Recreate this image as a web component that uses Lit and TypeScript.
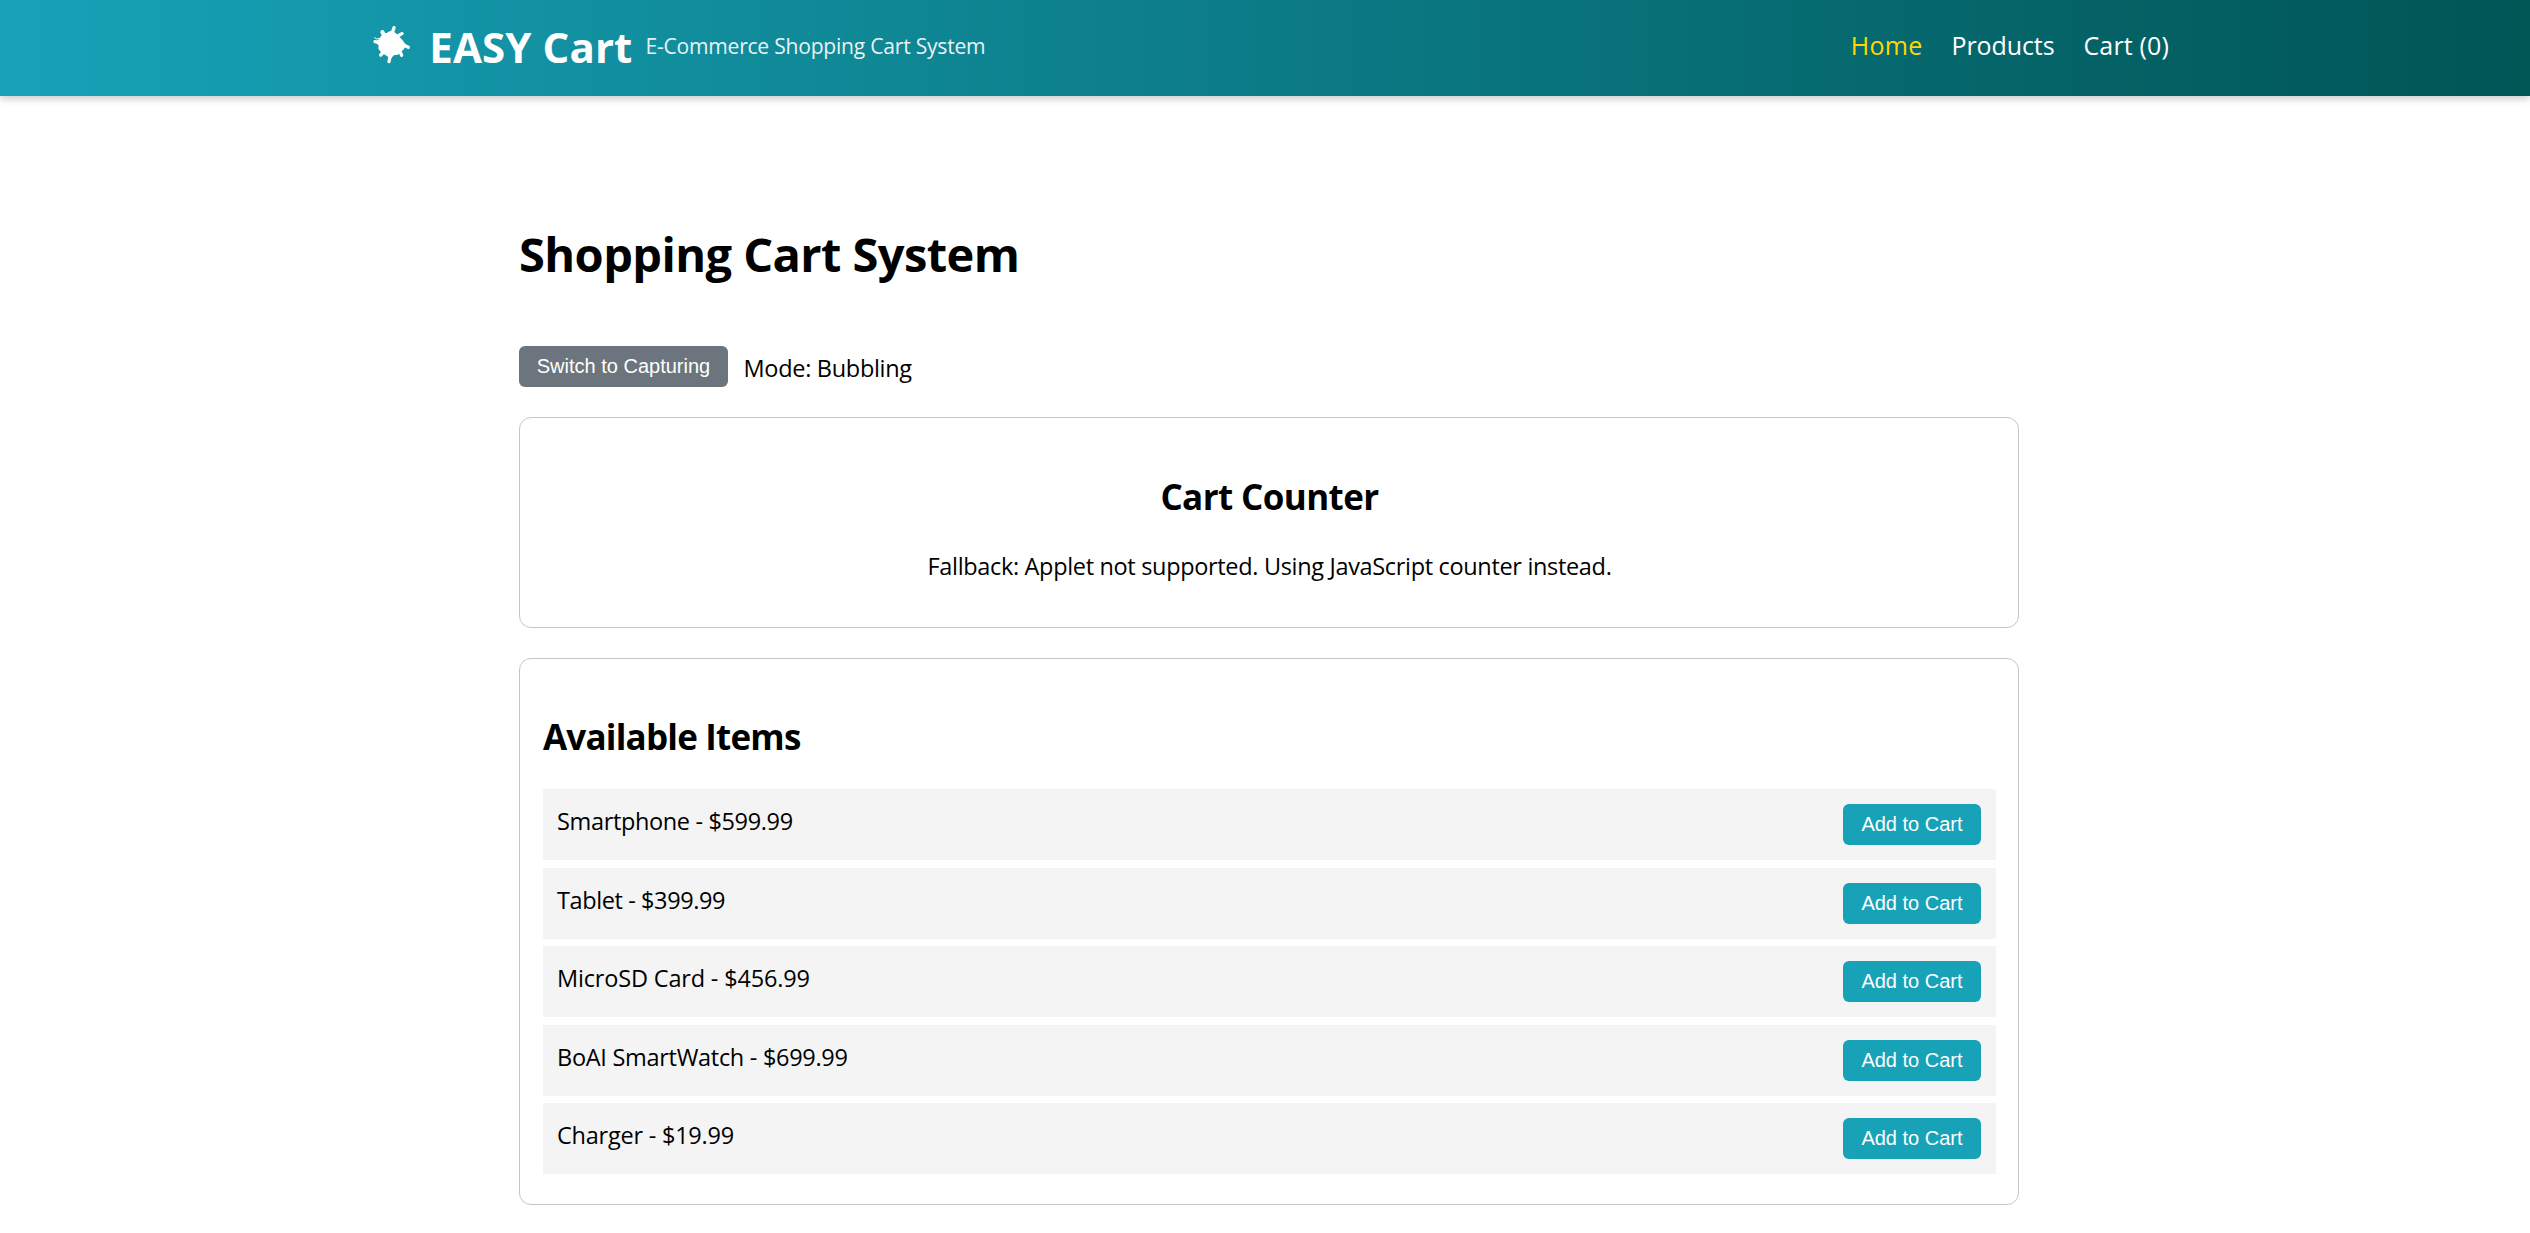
import { LitElement, html, css } from "lit";
import { customElement, state } from "lit/decorators.js";

interface Item {
  name: string;
  price: number;
}

const ITEMS: Item[] = [
  { name: "Smartphone", price: 599.99 },
  { name: "Tablet", price: 399.99 },
  { name: "MicroSD Card", price: 456.99 },
  { name: "BoAI SmartWatch", price: 699.99 },
  { name: "Charger", price: 19.99 },
];

@customElement("shop-header")
class ShopHeader extends LitElement {
  static properties = { count: { type: Number } };
  declare count: number;

  constructor() {
    super();
    this.count = 0;
  }

  static styles = css`
    :host {
      display: block;
    }
    .bar {
      box-sizing: border-box;
      height: 96px;
      padding: 0 361px 0 372px;
      display: flex;
      align-items: center;
      justify-content: space-between;
      color: #fff;
      background: linear-gradient(90deg, #17a2b8, #005555);
      box-shadow: 0 3px 7.5px rgba(0, 0, 0, 0.2);
      white-space: nowrap;
    }
    .brand,
    .nav {
      display: flex;
      align-items: center;
    }
    .mark {
      width: 39.33px;
      height: 39.33px;
      margin-right: 18px;
      margin-bottom: 7px;
    }
    .name {
      font-size: 42px;
      line-height: 58px;
      font-weight: 700;
      letter-spacing: 0.1px;
      margin-bottom: 3px;
      margin-right: 13px;
    }
    .tagline {
      font-size: 21.1px;
      line-height: 30px;
      letter-spacing: -0.24px;
      margin-bottom: 4px;
      opacity: 0.9;
    }
    .nav {
      gap: 29px;
      margin-bottom: 6px;
      font-size: 25px;
      line-height: 34px;
    }
    .link {
      color: #fff;
      text-decoration: none;
      letter-spacing: 0.15px;
    }
    .products {
      letter-spacing: -0.1px;
    }
    .active {
      color: #ffd700;
      letter-spacing: 0.3px;
    }
  `;

  render() {
    return html`
      <header class="bar">
        <div class="brand">
          <svg class="mark" viewBox="36 44 118 118" fill="#fff" stroke="#fff" stroke-linecap="round" stroke-linejoin="round">
            <path
              stroke-width="6"
              d="M70 73 L82 70 L92 65 L104 69 L114 79 L125 91 L135 105 L129 115 L121 122 L113 130 L100 132 L92 141 L80 133 L66 125 L58 114 L59 104 L50 96 L60 88 Z"
            />
            <path
              stroke-width="10"
              d="M96 70 L102 52 M110 79 L126 70 M126 102 L145 111 M116 116 L125 135 M92 130 L87 154 M74 122 L62 134 M62 97 L45 94"
            />
            <path stroke-width="12" d="M76 82 L67 65" />
            <path stroke-width="3" fill="none" d="M58 84 L50 86 L44 82" />
          </svg>
          <span class="name">EASY Cart</span>
          <span class="tagline">E-Commerce Shopping Cart System</span>
        </div>
        <nav class="nav">
          <a class="link active">Home</a>
          <a class="link products">Products</a>
          <a class="link">Cart (${this.count})</a>
        </nav>
      </header>
    `;
  }
}

@customElement("app-root")
class AppRoot extends LitElement {
  @state() private count = 0;
  @state() private capturing = false;

  static styles = css`
    :host {
      display: block;
      min-height: 1233px;
      background: #fff;
      color: #000;
      font-family: "Open Sans", "Noto Sans", sans-serif;
      font-size: 23.5px;
    }
    .page {
      width: 1500px;
      margin-left: 519px;
      padding-top: 126px;
    }
    .title {
      margin: 0 0 59px;
      font-size: 47px;
      line-height: 65px;
      font-weight: 700;
      letter-spacing: -0.58px;
    }
    .toolbar {
      display: flex;
      align-items: center;
      gap: 15.5px;
      height: 41px;
      margin-bottom: 30px;
    }
    .mode {
      line-height: 32px;
      margin-top: 3px;
      letter-spacing: -0.3px;
    }
    .btn {
      box-sizing: border-box;
      height: 41px;
      padding: 0;
      border: 0;
      border-radius: 6px;
      font-family: "Liberation Sans", Arial, sans-serif;
      font-size: 20px;
      line-height: 41px;
      color: #fff;
      background: #17a2b8;
    }
    .switch {
      width: 209px;
      background: #6c757d;
    }
    .add {
      width: 138px;
    }
    .card {
      box-sizing: border-box;
      border: 1px solid #c6c6c6;
      border-radius: 12px;
      padding: 53px 22px 30px 23px;
    }
    .counter {
      height: 211px;
      margin-bottom: 30px;
      padding-top: 54px;
      padding-right: 22px;
      text-align: center;
    }
    .heading {
      margin: 0 0 28px;
      font-size: 35px;
      line-height: 49px;
      font-weight: 700;
      letter-spacing: -0.8px;
    }
    .counter .heading {
      margin-bottom: 29px;
      letter-spacing: -0.6px;
    }
    .note {
      margin: 0;
      line-height: 32px;
      letter-spacing: -0.33px;
    }
    .list {
      display: flex;
      flex-direction: column;
      gap: 7.5px;
      margin: 0;
      padding: 0;
      list-style: none;
    }
    .row {
      box-sizing: border-box;
      height: 71px;
      padding: 15px 15px 15px 14px;
      display: flex;
      justify-content: space-between;
      align-items: flex-start;
      background: #f4f4f4;
      line-height: 34px;
      letter-spacing: -0.35px;
    }
    .row .btn {
      letter-spacing: 0;
    }
    .row:nth-child(2) {
      letter-spacing: -0.4px;
    }
    .row:nth-child(3) {
      letter-spacing: -0.17px;
    }
    .row:nth-child(4) {
      letter-spacing: -0.29px;
    }
    .row:nth-child(5) {
      letter-spacing: -0.23px;
    }
  `;

  render() {
    const mode = this.capturing ? "Capturing" : "Bubbling";
    const other = this.capturing ? "Bubbling" : "Capturing";
    return html`
      <shop-header .count=${this.count}></shop-header>
      <main class="page">
        <h1 class="title">Shopping Cart System</h1>
        <div class="toolbar">
          <button class="btn switch" @click=${() => (this.capturing = !this.capturing)}>Switch to ${other}</button>
          <span class="mode">Mode: ${mode}</span>
        </div>
        <section class="card counter">
          <h2 class="heading">Cart Counter</h2>
          <p class="note">Fallback: Applet not supported. Using JavaScript counter instead.</p>
        </section>
        <section class="card">
          <h2 class="heading">Available Items</h2>
          <ul class="list">
            ${ITEMS.map(
              (item) => html`<li class="row">
                <span>${item.name} - $${item.price.toFixed(2)}</span>
                <button class="btn add" @click=${() => (this.count += 1)}>Add to Cart</button>
              </li>`
            )}
          </ul>
        </section>
      </main>
    `;
  }
}
